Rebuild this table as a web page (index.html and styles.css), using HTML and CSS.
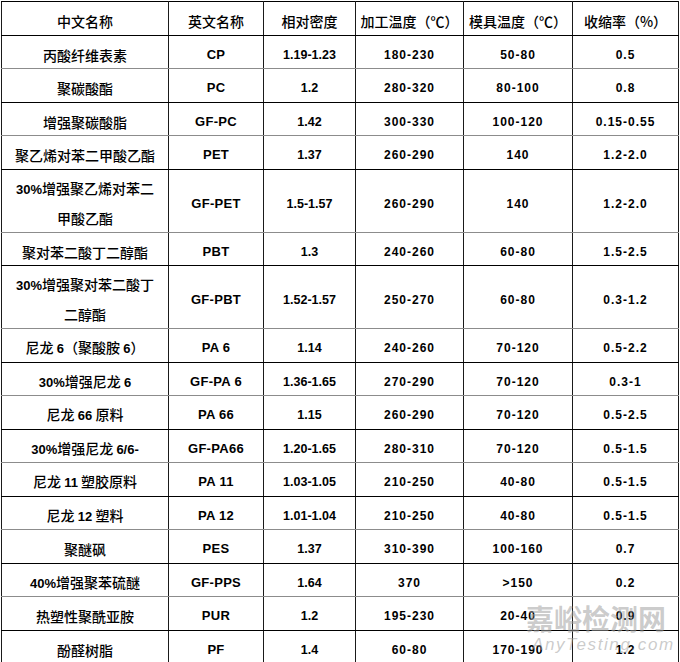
FILE: index.html
```html
<!DOCTYPE html>
<html lang="zh-CN">
<head>
<meta charset="utf-8">
<title>塑料成型参数</title>
<link rel="stylesheet" href="styles.css">
</head>
<body>
<div class="page">
<table class="grid">
<colgroup>
<col class="c1"><col class="c2"><col class="c3"><col class="c4"><col class="c5"><col class="c6">
</colgroup>
<thead>
<tr class="r">
<th>中文名称</th><th>英文名称</th><th>相对密度</th><th>加工温度（℃）</th><th>模具温度（℃）</th><th>收缩率（%）</th>
</tr>
</thead>
<tbody>
<tr class="r"><td class="zh">丙酸纤维表素</td><td class="en">CP</td><td class="den">1.19-1.23</td><td class="num">180-230</td><td class="num">50-80</td><td class="num">0.5</td></tr>
<tr class="r"><td class="zh">聚碳酸酯</td><td class="en">PC</td><td class="den">1.2</td><td class="num">280-320</td><td class="num">80-100</td><td class="num">0.8</td></tr>
<tr class="r"><td class="zh">增强聚碳酸脂</td><td class="en">GF-PC</td><td class="den">1.42</td><td class="num">300-330</td><td class="num">100-120</td><td class="num">0.15-0.55</td></tr>
<tr class="r"><td class="zh">聚乙烯对苯二甲酸乙酯</td><td class="en">PET</td><td class="den">1.37</td><td class="num">260-290</td><td class="num">140</td><td class="num">1.2-2.0</td></tr>
<tr class="d"><td class="zh"><span class="n">30%</span>增强聚乙烯对苯二<br>甲酸乙酯</td><td class="en">GF-PET</td><td class="den">1.5-1.57</td><td class="num">260-290</td><td class="num">140</td><td class="num">1.2-2.0</td></tr>
<tr class="r"><td class="zh">聚对苯二酸丁二醇酯</td><td class="en">PBT</td><td class="den">1.3</td><td class="num">240-260</td><td class="num">60-80</td><td class="num">1.5-2.5</td></tr>
<tr class="d"><td class="zh"><span class="n">30%</span>增强聚对苯二酸丁<br>二醇酯</td><td class="en">GF-PBT</td><td class="den">1.52-1.57</td><td class="num">250-270</td><td class="num">60-80</td><td class="num">0.3-1.2</td></tr>
<tr class="r"><td class="zh">尼龙 <span class="n">6</span>（聚酸胺 <span class="n">6</span>）</td><td class="en">PA 6</td><td class="den">1.14</td><td class="num">240-260</td><td class="num">70-120</td><td class="num">0.5-2.2</td></tr>
<tr class="r"><td class="zh"><span class="n">30%</span>增强尼龙 <span class="n">6</span></td><td class="en">GF-PA 6</td><td class="den">1.36-1.65</td><td class="num">270-290</td><td class="num">70-120</td><td class="num">0.3-1</td></tr>
<tr class="r"><td class="zh">尼龙 <span class="n">66</span> 原料</td><td class="en">PA 66</td><td class="den">1.15</td><td class="num">260-290</td><td class="num">70-120</td><td class="num">0.5-2.5</td></tr>
<tr class="r"><td class="zh"><span class="n">30%</span>增强尼龙 <span class="n">6/6-</span></td><td class="en">GF-PA66</td><td class="den">1.20-1.65</td><td class="num">280-310</td><td class="num">70-120</td><td class="num">0.5-1.5</td></tr>
<tr class="r"><td class="zh">尼龙 <span class="n">11</span> 塑胶原料</td><td class="en">PA 11</td><td class="den">1.03-1.05</td><td class="num">210-250</td><td class="num">40-80</td><td class="num">0.5-1.5</td></tr>
<tr class="r"><td class="zh">尼龙 <span class="n">12</span> 塑料</td><td class="en">PA 12</td><td class="den">1.01-1.04</td><td class="num">210-250</td><td class="num">40-80</td><td class="num">0.5-1.5</td></tr>
<tr class="r"><td class="zh">聚醚砜</td><td class="en">PES</td><td class="den">1.37</td><td class="num">310-390</td><td class="num">100-160</td><td class="num">0.7</td></tr>
<tr class="r"><td class="zh"><span class="n">40%</span>增强聚苯硫醚</td><td class="en">GF-PPS</td><td class="den">1.64</td><td class="num">370</td><td class="num">&gt;150</td><td class="num">0.2</td></tr>
<tr class="r"><td class="zh">热塑性聚酰亚胺</td><td class="en">PUR</td><td class="den">1.2</td><td class="num">195-230</td><td class="num">20-40</td><td class="num">0.9</td></tr>
<tr class="r"><td class="zh">酚醛树脂</td><td class="en">PF</td><td class="den">1.4</td><td class="num">60-80</td><td class="num">170-190</td><td class="num">1.2</td></tr>
</tbody>
</table>
<div class="mark">
<div class="mark-cn">嘉峪检测网</div>
<div class="mark-en">AnyTesting.com</div>
</div>
</div>
</body>
</html>
```
FILE: styles.css
```css
html, body {
  margin: 0;
  padding: 0;
  background: #fff;
}
.page {
  position: relative;
  width: 680px;
  height: 662px;
  overflow: hidden;
  padding: 1px 0 0 1px;
  box-sizing: border-box;
}
.grid {
  border-collapse: collapse;
  table-layout: fixed;
  width: 677px;
  color: #000;
  font-family: "Noto Sans CJK SC", sans-serif;
  font-size: 14px;
}
.c1 { width: 167px; }
.c2 { width: 95px; }
.c3 { width: 92px; }
.c4 { width: 108px; }
.c5 { width: 109px; }
.c6 { width: 106px; }
.grid th, .grid td {
  border-left: 1px solid #1a1a1a;
  border-right: 1px solid #1a1a1a;
  border-top: 1px solid #000;
  border-bottom: 1px solid #000;
  text-align: center;
  vertical-align: middle;
  padding: 6px 0 0 0;
  line-height: 20px;
  white-space: nowrap;
}
.grid th,
.grid .zh {
  font-weight: 500;
}
.grid tbody tr:nth-child(odd) td {
  border-bottom-color: #8c8c8c;
}
.grid thead tr th {
  border-bottom-color: #000;
}
.r { height: 33.5px; }
.d { height: 62px; }
.d .zh {
  line-height: 28px;
  padding-top: 4px;
}
.n {
  font-family: "Liberation Sans", sans-serif;
  font-weight: 700;
  font-size: 13px;
}
.en {
  font-family: "Liberation Sans", sans-serif;
  font-weight: 700;
  font-size: 13px;
  letter-spacing: 0.3px;
}
.den {
  font-family: "Liberation Sans", sans-serif;
  font-weight: 700;
  font-size: 12.5px;
}
.num {
  font-family: "Liberation Sans", sans-serif;
  font-weight: 700;
  font-size: 12px;
  letter-spacing: 1px;
}
.mark {
  position: absolute;
  left: 526px;
  top: 600px;
  width: 146px;
  color: rgba(160, 160, 160, 0.55);
  pointer-events: none;
}
.mark-cn {
  font-family: "Noto Sans CJK SC", sans-serif;
  font-weight: 700;
  font-size: 28px;
  line-height: 36px;
  letter-spacing: 0;
}
.mark-en {
  font-family: "Liberation Sans", sans-serif;
  font-style: italic;
  font-size: 17px;
  line-height: 18px;
  letter-spacing: 1.6px;
  margin-left: 6px;
}
```
